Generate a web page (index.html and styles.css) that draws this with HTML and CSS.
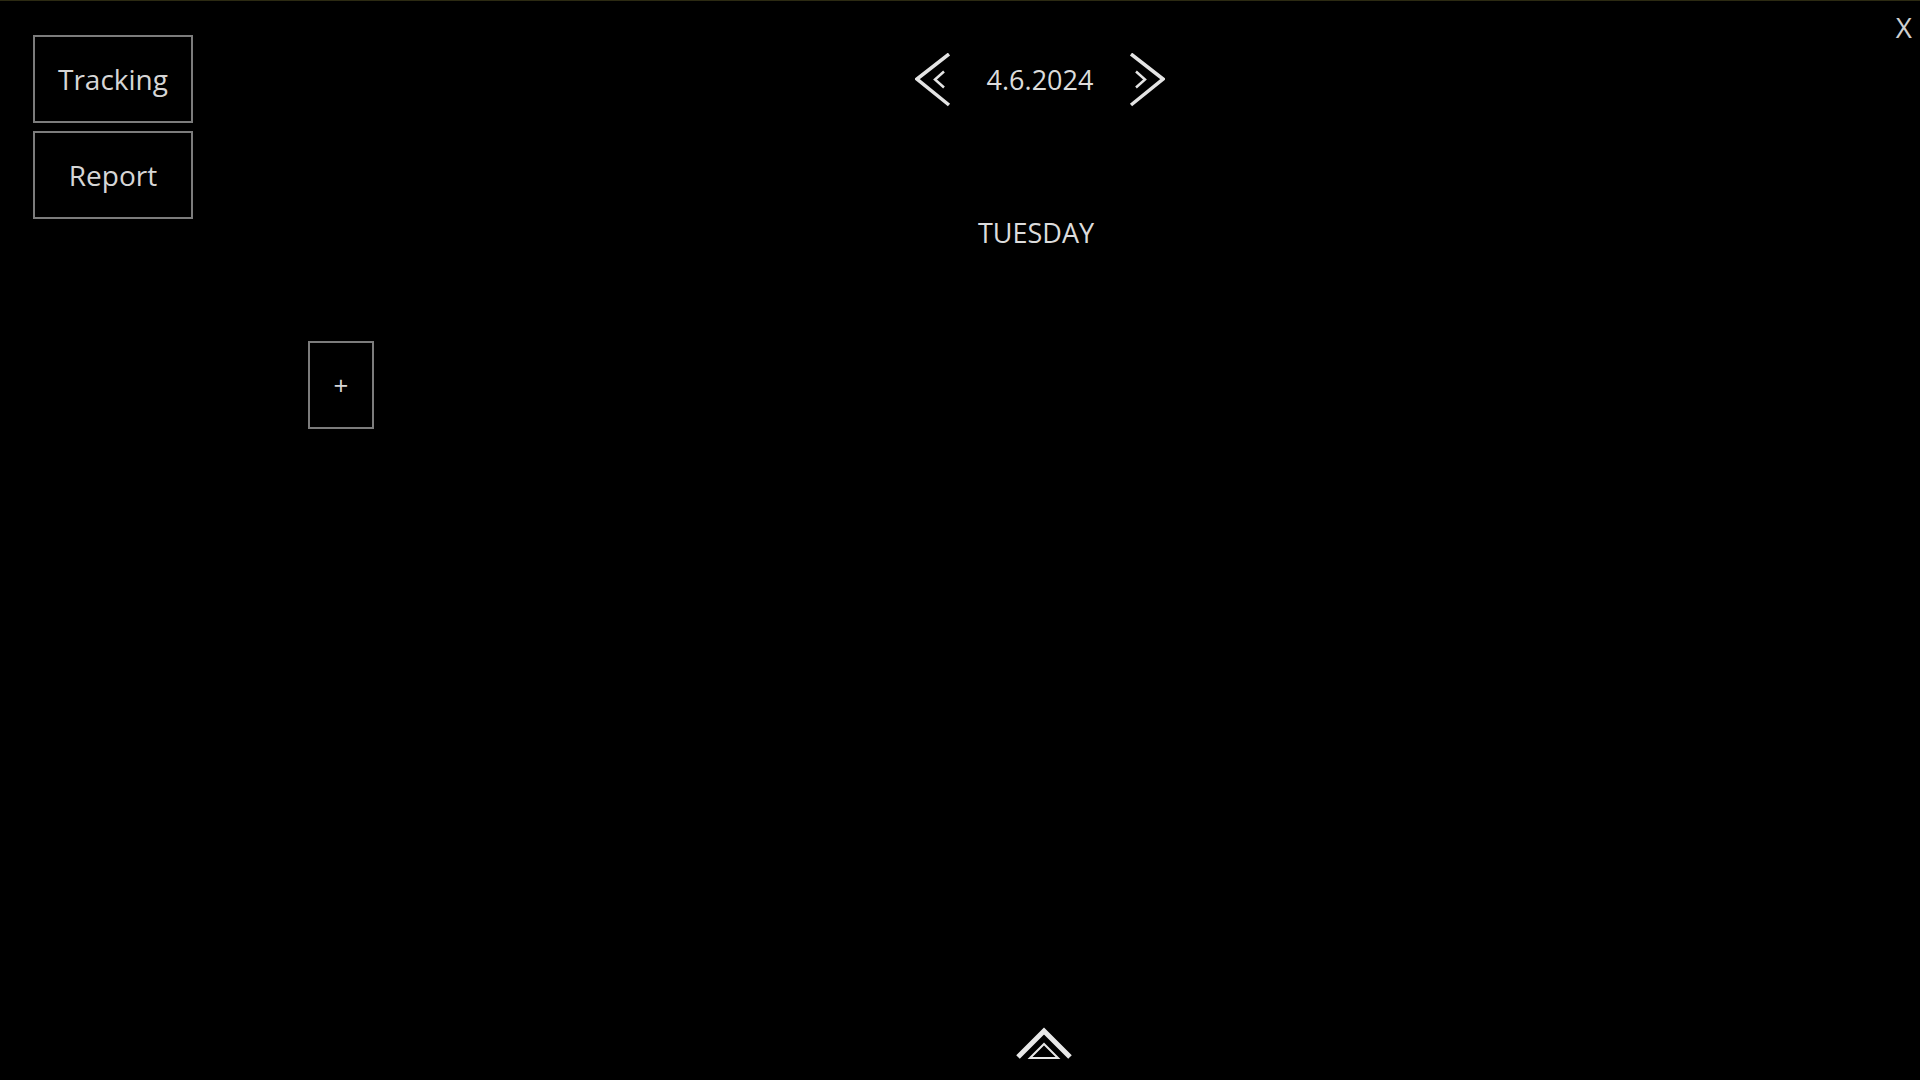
FILE: index.html
```html
<!DOCTYPE html>
<html lang="en">
<head>
  <meta charset="UTF-8"/>
  <meta name="viewport" content="width=device-width,initial-scale=1.0"/>
  <title>Time Tracker</title>
  <link rel="stylesheet" href="styles.css">
</head>
<body>
<div class="app">
  <nav class="sidebar">
    <button class="menu-btn">Tracking</button>
    <button class="menu-btn">Report</button>
  </nav>

  <main class="main">
    <div class="date-nav">
      <button class="arrow" aria-label="Previous day">
        <svg width="36" height="54" viewBox="0 0 36 54">
          <polyline points="34,1 2,26 34,52" fill="none" stroke="#e4e4e4" stroke-width="3.5"/>
          <polyline points="29,18.5 20,26.5 29,34.5" fill="none" stroke="#e4e4e4" stroke-width="2.5"/>
        </svg>
      </button>
      <span class="date">4.6.2024</span>
      <button class="arrow" aria-label="Next day">
        <svg width="36" height="54" viewBox="0 0 36 54">
          <polyline points="2,1 34,26 2,52" fill="none" stroke="#e4e4e4" stroke-width="3.5"/>
          <polyline points="7,18.5 16,26.5 7,34.5" fill="none" stroke="#e4e4e4" stroke-width="2.5"/>
        </svg>
      </button>
    </div>

    <h2 class="weekday">TUESDAY</h2>

    <div class="entries">
      <button class="add-btn">+</button>
    </div>

    <button class="expand" aria-label="Expand">
      <svg width="56" height="36" viewBox="0 0 56 36">
        <polyline points="2,31 28,5 54,31" fill="none" stroke="#e8e8e8" stroke-width="5"/>
        <polygon points="14,32 28,18 42,32" fill="none" stroke="#e8e8e8" stroke-width="2"/>
      </svg>
    </button>
  </main>

  <button class="close-btn">X</button>
</div>
</body>
</html>
```

FILE: styles.css
```css
:root{--bg:#000;--text:#d6d6d6;--line:#7c7c7c}
*{box-sizing:border-box;font-family:'Open Sans',sans-serif}
body{margin:0;background:var(--bg);color:var(--text);border-top:1px solid #2c2a12}
button{background:none;border:none;color:var(--text);padding:0;cursor:pointer;font-size:28px;font-weight:500}

.app{display:flex;min-height:calc(100vh - 1px);position:relative}

.sidebar{display:flex;flex-direction:column;gap:8px;padding:34px 0 0 33px;width:192px}
.menu-btn{width:160px;height:88px;border:2px solid var(--line);line-height:38px}

.main{flex:1;display:flex;flex-direction:column;align-items:center;padding-right:32px}

.date-nav{display:flex;align-items:center;gap:36px;margin-top:52px}
.arrow{display:flex}
.date{font-size:27px;font-weight:500;line-height:38px;color:#dcdcdc}

.weekday{margin:107px 8px 0 0;font-size:27px;font-weight:500;line-height:38px;color:#dcdcdc}

.entries{align-self:stretch;display:flex;padding-left:116px;margin-top:89px}
.add-btn{width:66px;height:88px;border:2px solid var(--line);font-size:26px;line-height:1}

.expand{margin:auto 0 18px 8px;display:flex}

.close-btn{position:absolute;top:7px;right:8px;line-height:38px;color:#cfcfcf}
```
